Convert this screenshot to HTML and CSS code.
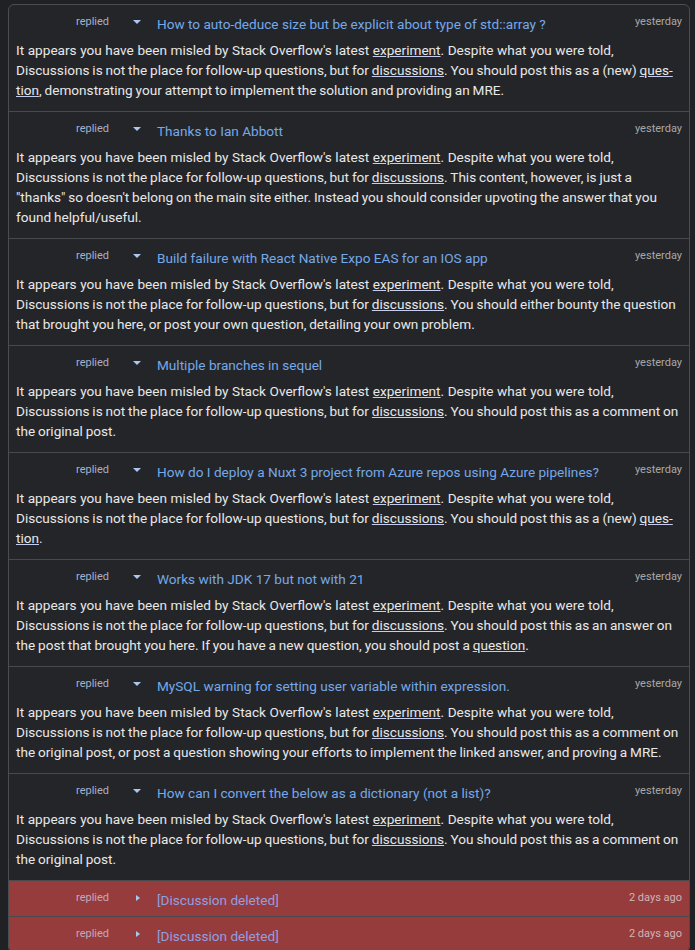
FILE: index.html
```html
<!DOCTYPE html>
<html lang="en">
<head>
    <meta charset="UTF-8">
    <meta name="viewport" content="width=device-width, initial-scale=1.0">
    <title>Replies</title>
    <link rel="stylesheet" href="styles.css">
</head>
<body>
    <div class="feed">

        <div class="item">
            <div class="head">
                <span class="kind">replied</span>
                <span class="toggle"><span class="caret-down"></span></span>
                <a class="title" href="#">How to auto-deduce size but be explicit about type of std::array ?</a>
                <span class="when">yesterday</span>
            </div>
            <p class="text">It appears you have been misled by Stack Overflow's latest <a href="#">experiment</a>. Despite what you were told, Discussions is not the place for follow-up questions, but for <a href="#">discussions</a>. You should post this as a (new) <a href="#">ques&shy;tion</a>, demonstrating your attempt to implement the solution and providing an MRE.</p>
        </div>

        <div class="item">
            <div class="head">
                <span class="kind">replied</span>
                <span class="toggle"><span class="caret-down"></span></span>
                <a class="title" href="#">Thanks to Ian Abbott</a>
                <span class="when">yesterday</span>
            </div>
            <p class="text">It appears you have been misled by Stack Overflow's latest <a href="#">experiment</a>. Despite what you were told, Discussions is not the place for follow-up questions, but for <a href="#">discussions</a>. This content, however, is just a "thanks" so doesn't belong on the main site either. Instead you should consider upvoting the answer that you found helpful/useful.</p>
        </div>

        <div class="item">
            <div class="head">
                <span class="kind">replied</span>
                <span class="toggle"><span class="caret-down"></span></span>
                <a class="title" href="#">Build failure with React Native Expo EAS for an IOS app</a>
                <span class="when">yesterday</span>
            </div>
            <p class="text">It appears you have been misled by Stack Overflow's latest <a href="#">experiment</a>. Despite what you were told, Discussions is not the place for follow-up questions, but for <a href="#">discussions</a>. You should either bounty the question that brought you here, or post your own question, detailing your own problem.</p>
        </div>

        <div class="item">
            <div class="head">
                <span class="kind">replied</span>
                <span class="toggle"><span class="caret-down"></span></span>
                <a class="title" href="#">Multiple branches in sequel</a>
                <span class="when">yesterday</span>
            </div>
            <p class="text">It appears you have been misled by Stack Overflow's latest <a href="#">experiment</a>. Despite what you were told, Discussions is not the place for follow-up questions, but for <a href="#">discussions</a>. You should post this as a comment on the original post.</p>
        </div>

        <div class="item">
            <div class="head">
                <span class="kind">replied</span>
                <span class="toggle"><span class="caret-down"></span></span>
                <a class="title" href="#">How do I deploy a Nuxt 3 project from Azure repos using Azure pipelines?</a>
                <span class="when">yesterday</span>
            </div>
            <p class="text">It appears you have been misled by Stack Overflow's latest <a href="#">experiment</a>. Despite what you were told, Discussions is not the place for follow-up questions, but for <a href="#">discussions</a>. You should post this as a (new) <a href="#">ques&shy;tion</a>.</p>
        </div>

        <div class="item">
            <div class="head">
                <span class="kind">replied</span>
                <span class="toggle"><span class="caret-down"></span></span>
                <a class="title" href="#">Works with JDK 17 but not with 21</a>
                <span class="when">yesterday</span>
            </div>
            <p class="text">It appears you have been misled by Stack Overflow's latest <a href="#">experiment</a>. Despite what you were told, Discussions is not the place for follow-up questions, but for <a href="#">discussions</a>. You should post this as an answer on the post that brought you here. If you have a new question, you should post a <a href="#">question</a>.</p>
        </div>

        <div class="item">
            <div class="head">
                <span class="kind">replied</span>
                <span class="toggle"><span class="caret-down"></span></span>
                <a class="title" href="#">MySQL warning for setting user variable within expression.</a>
                <span class="when">yesterday</span>
            </div>
            <p class="text">It appears you have been misled by Stack Overflow's latest <a href="#">experiment</a>. Despite what you were told, Discussions is not the place for follow-up questions, but for <a href="#">discussions</a>. You should post this as a comment on the original post, or post a question showing your efforts to implement the linked answer, and proving a MRE.</p>
        </div>

        <div class="item">
            <div class="head">
                <span class="kind">replied</span>
                <span class="toggle"><span class="caret-down"></span></span>
                <a class="title" href="#">How can I convert the below as a dictionary (not a list)?</a>
                <span class="when">yesterday</span>
            </div>
            <p class="text">It appears you have been misled by Stack Overflow's latest <a href="#">experiment</a>. Despite what you were told, Discussions is not the place for follow-up questions, but for <a href="#">discussions</a>. You should post this as a comment on the original post.</p>
        </div>

        <div class="item deleted">
            <div class="head">
                <span class="kind">replied</span>
                <span class="toggle"><span class="caret-right"></span></span>
                <a class="title" href="#">[Discussion deleted]</a>
                <span class="when">2 days ago</span>
            </div>
        </div>

        <div class="item deleted">
            <div class="head">
                <span class="kind">replied</span>
                <span class="toggle"><span class="caret-right"></span></span>
                <a class="title" href="#">[Discussion deleted]</a>
                <span class="when">2 days ago</span>
            </div>
        </div>

    </div>
</body>
</html>
```

FILE: styles.css
```css
html {
    overflow: hidden;
}

body {
    font-family: Roboto, "Liberation Sans", Arial, sans-serif;
    background-color: #202124;
    color: #e8e8e8;
    margin: 4px 5px 0 8px;
}

.feed {
    background: #242528;
    border: 1px solid #4b4d51;
    border-radius: 6px;
    overflow: hidden;
}

.item {
    padding: 9px 7px 11px;
    border-top: 1px solid #48494d;
}

.item:first-child {
    border-top: none;
}

.head {
    display: flex;
    align-items: flex-start;
    height: 20px;
}

.kind {
    margin-left: 60px;
    width: 57px;
    padding-top: 1px;
    font-size: 11px;
    line-height: 14px;
    color: #a6b0cc;
}

.toggle {
    width: 24px;
    height: 14px;
}

.caret-down {
    display: block;
    width: 0;
    height: 0;
    margin-top: 6px;
    border-left: 4px solid transparent;
    border-right: 4px solid transparent;
    border-top: 4px solid #a9c7ef;
}

.caret-right {
    display: block;
    width: 0;
    height: 0;
    margin: 5px 0 0 3px;
    border-top: 3px solid transparent;
    border-bottom: 3px solid transparent;
    border-left: 4px solid #a9c7ef;
}

.title {
    flex: 1;
    font-size: 13.6px;
    line-height: 20px;
    color: #74a9ea;
    text-decoration: none;
}

.when {
    padding-top: 1px;
    font-size: 11px;
    line-height: 14px;
    color: #a8a8a8;
}

.text {
    margin: 6px 0 0;
    font-size: 13.6px;
    line-height: 20px;
    word-spacing: -0.5px;
}

.text::first-line {
    word-spacing: 0.2px;
}

.text a {
    color: #e8e8e8;
    text-decoration: underline;
    text-decoration-color: #c5cdf0;
}

.item.deleted {
    background: #973c3d;
    padding-bottom: 6px;
    border-top-color: #4a4a4c;
}

.deleted .kind {
    color: #c2a9b9;
}

.deleted .title {
    color: #8f9fe2;
}

.deleted .when {
    color: #cfb4b4;
}
```
